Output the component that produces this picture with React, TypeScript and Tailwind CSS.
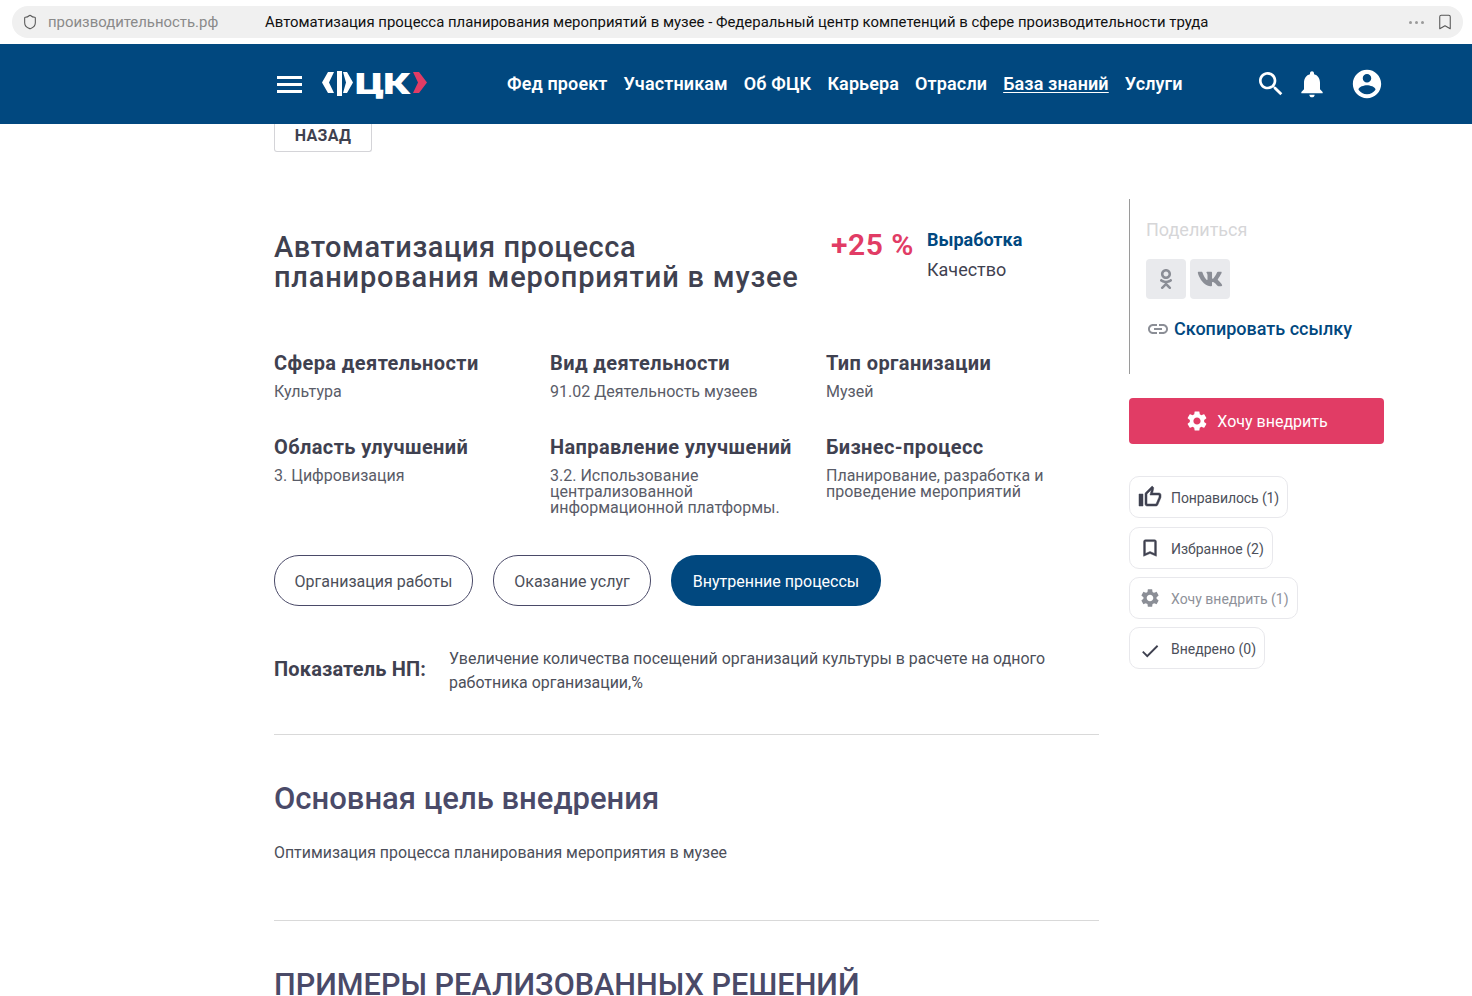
import { Bookmark, Shield } from "lucide-react";
import { FaOdnoklassniki, FaVk } from "react-icons/fa";

const NAV = ["Фед проект", "Участникам", "Об ФЦК", "Карьера", "Отрасли", "База знаний", "Услуги"];

const META = [
  { title: "Сфера деятельности", text: "Культура" },
  { title: "Вид деятельности", text: "91.02 Деятельность музеев" },
  { title: "Тип организации", text: "Музей" },
  { title: "Область улучшений", text: "3. Цифровизация" },
  { title: "Направление улучшений", text: "3.2. Использование централизованной информационной платформы." },
  { title: "Бизнес-процесс", text: "Планирование, разработка и проведение мероприятий" },
];

const GEAR =
  "M19.14 12.94c.04-.3.06-.61.06-.94 0-.32-.02-.64-.07-.94l2.03-1.58c.18-.14.23-.41.12-.61l-1.92-3.32c-.12-.22-.37-.29-.59-.22l-2.39.96c-.5-.38-1.03-.7-1.62-.94l-.36-2.54c-.04-.24-.24-.41-.48-.41h-3.84c-.24 0-.43.17-.47.41l-.36 2.54c-.59.24-1.13.57-1.62.94l-2.39-.96c-.22-.08-.47 0-.59.22L2.74 8.87c-.12.21-.08.47.12.61l2.03 1.58c-.05.3-.09.63-.09.94s.02.64.07.94l-2.03 1.58c-.18.14-.23.41-.12.61l1.92 3.32c.12.22.37.29.59.22l2.39-.96c.5.38 1.03.7 1.62.94l.36 2.54c.05.24.24.41.48.41h3.84c.24 0 .44-.17.47-.41l.36-2.54c.59-.24 1.13-.56 1.62-.94l2.39.96c.22.08.47 0 .59-.22l1.92-3.32c.12-.22.07-.47-.12-.61l-2.01-1.58zM12 15.6c-1.98 0-3.6-1.62-3.6-3.6s1.62-3.6 3.6-3.6 3.6 1.62 3.6 3.6-1.62 3.6-3.6 3.6z";

function Icon({ d, className, bold }: { d: string; className: string; bold?: boolean }) {
  return (
    <svg viewBox="0 0 24 24" fill="currentColor" stroke={bold ? "currentColor" : "none"} strokeWidth={bold ? 0.5 : 0} className={className}>
      <path d={d} />
    </svg>
  );
}

function Logo() {
  return (
    <div className="flex items-start h-[26px] w-[106px]">
      <svg viewBox="0 0 31 26" className="w-[31px] h-[26px] shrink-0" fill="white">
        <polygon points="6,1 12,1 7,11.5 12,22 6,22 0,11.5" />
        <rect x="15" y="0" width="5" height="25" />
        <polygon points="21,1 25,1 31,11.5 25,22 21,22 24,11.5" />
      </svg>
      <div className="ml-[2px] w-[58px] h-[26px] shrink-0">
        <span className="block origin-left scale-x-[1.27] text-white font-black text-[29px] leading-[25px] tracking-[-1px] font-['Inter',sans-serif]">ЦК</span>
      </div>
      <svg viewBox="0 0 14 21" className="w-[14px] h-[21px] mt-px shrink-0" fill="#e13c65">
        <polygon points="0,0 6,0 14,10.5 6,21 0,21 5,10.5" />
      </svg>
    </div>
  );
}

function ActionButton({ label, icon, muted, className }: { label: string; icon: React.ReactNode; muted?: boolean; className?: string }) {
  return (
    <div className={`flex items-center self-start h-[42px] pl-[9px] pr-2 border border-[#e8e8ec] rounded-[10px] ${className ?? ""}`}>
      <span className="w-[22px] flex justify-center">{icon}</span>
      <span className={`ml-[10px] pt-[2px] text-[14px] whitespace-nowrap ${muted ? "text-[#8e9199]" : "text-[#4c4f5a]"}`}>{label}</span>
    </div>
  );
}

export default function App() {
  return (
    <div className="h-[996px] w-[1472px] overflow-hidden bg-white font-['Roboto',sans-serif] text-[#3f4150]">
      <div className="h-[44px] px-3 pt-[6px]">
        <div className="h-[32px] w-[1451px] rounded-full bg-[#f0f0f0] flex items-center pl-[10px] pr-[9px] text-[14.92px]">
          <Shield size={16} strokeWidth={1.6} className="text-[#5a5a5a]" />
          <span className="ml-[10px] w-[217px] text-[#8a8a8a]">производительность.рф</span>
          <span className="text-[#111]">Автоматизация процесса планирования мероприятий в музее - Федеральный центр компетенций в сфере производительности труда</span>
          <span className="ml-auto flex gap-[3px]">
            <span className="w-[3px] h-[3px] rounded-full bg-[#9a9a9a]" />
            <span className="w-[3px] h-[3px] rounded-full bg-[#9a9a9a]" />
            <span className="w-[3px] h-[3px] rounded-full bg-[#9a9a9a]" />
          </span>
          <Bookmark size={18} strokeWidth={1.4} className="ml-3 text-[#555]" />
        </div>
      </div>

      <header className="h-[80px] bg-[#01487f] flex items-center pl-[277px] text-white">
        <div className="flex flex-col gap-[4px] w-[25px]">
          <span className="h-[3px] bg-white" />
          <span className="h-[3px] bg-white" />
          <span className="h-[3px] bg-white" />
        </div>
        <div className="ml-5 mt-[-1px]">
          <Logo />
        </div>
        <nav className="ml-[79px] mb-[2px] flex gap-4 text-[18px] font-semibold tracking-[0.13px]">
          {NAV.map((item) => (
            <a key={item} className={item === "База знаний" ? "underline underline-offset-2" : ""}>
              {item}
            </a>
          ))}
        </nav>
        <Icon d="M15.5 14h-.79l-.28-.27C15.41 12.59 16 11.11 16 9.5 16 5.91 13.09 3 9.5 3S3 5.91 3 9.5 5.91 16 9.5 16c1.61 0 3.09-.59 4.23-1.57l.27.28v.79l5 4.99L20.49 19l-4.99-5zm-6 0C7.01 14 5 11.99 5 9.5S7.01 5 9.5 5 14 7.01 14 9.5 11.99 14 9.5 14z" className="w-[32px] h-[32px] ml-[72px] text-white" />
        <Icon d="M12 22c1.1 0 2-.9 2-2h-4c0 1.1.89 2 2 2zm6-6v-5c0-3.07-1.64-5.64-4.5-6.32V4c0-.83-.67-1.5-1.5-1.5s-1.5.67-1.5 1.5v.68C7.63 5.36 6 7.92 6 11v5l-2 2v1h16v-1l-2-2z" className="w-[32px] h-[32px] ml-[9px] text-white" />
        <Icon d="M12 2C6.48 2 2 6.48 2 12s4.48 10 10 10 10-4.48 10-10S17.52 2 12 2zm0 3c1.66 0 3 1.34 3 3s-1.34 3-3 3-3-1.34-3-3 1.34-3 3-3zm0 14.2c-2.5 0-4.71-1.28-6-3.22.03-1.99 4-3.08 6-3.08 1.99 0 5.97 1.09 6 3.08-1.29 1.94-3.5 3.22-6 3.22z" className="w-[34px] h-[34px] ml-[22px] text-white" />
      </header>

      <main className="flex pl-[274px]">
        <div className="w-[825px]">
          <div className="flex items-center justify-center w-[98px] h-[28px] pb-[4px] border border-t-0 border-[#d4d4d8] rounded-b-[3px] font-bold text-[16px] tracking-[0.3px]">НАЗАД</div>

          <div className="flex mt-[78px] h-[66px]">
            <h1 className="w-[557px] text-[29px] leading-[30px] font-medium pt-[2px]">
              <span className="block tracking-[0.55px]">Автоматизация процесса</span>
              <span className="block tracking-[0.8px]">планирования мероприятий в музее</span>
            </h1>
            <div className="w-[96px] text-[30px] leading-[30px] font-semibold text-[#e13c65] tracking-[0.5px] whitespace-nowrap">+25 %</div>
            <div>
              <div className="text-[18px] leading-[20px] font-bold text-[#01487f]">Выработка</div>
              <div className="text-[18px] leading-[20px] mt-[10px]">Качество</div>
            </div>
          </div>

          <div className="grid grid-cols-[276px_276px_273px] mt-[55px] gap-y-[30px]">
            {META.map((m, i) => (
              <div key={m.title} className={i < 3 ? "h-[54px]" : "h-[82px]"}>
                <div className="text-[20px] leading-[24px] font-bold tracking-[0.4px] whitespace-nowrap">{m.title}</div>
                <div className="mt-[9px] text-[16px] leading-[16px] text-[#5a5c68] pr-5">{m.text}</div>
              </div>
            ))}
          </div>

          <div className="flex gap-5 mt-[38px]">
            <div className="h-[51px] w-[199px] pt-[2px] rounded-[25px] border border-[#4a4a68] flex items-center justify-center text-[16px] text-[#4c4f5a]">Организация работы</div>
            <div className="h-[51px] w-[158px] pt-[2px] rounded-[25px] border border-[#4a4a68] flex items-center justify-center text-[16px] text-[#4c4f5a]">Оказание услуг</div>
            <div className="h-[51px] w-[210px] pt-[2px] rounded-[25px] bg-[#01487f] flex items-center justify-center text-[16px] text-white">Внутренние процессы</div>
          </div>

          <div className="flex items-center mt-[41px]">
            <div className="w-[175px] mb-[4px] text-[20px] font-bold tracking-[0.15px] whitespace-nowrap">Показатель НП:</div>
            <div className="w-[620px] text-[15.95px] leading-[24px] text-[#4c4f5a]">Увеличение количества посещений организаций культуры в расчете на одного работника организации,%</div>
          </div>

          <div className="h-px bg-[#d9d9d9] mt-[39px]" />

          <h2 className="mt-[46px] text-[31px] leading-[36px] font-medium text-[#4a4a68]">Основная цель внедрения</h2>
          <p className="mt-[24px] text-[15.9px] leading-[24px] text-[#4c4f5a]">Оптимизация процесса планирования мероприятия в музее</p>

          <div className="h-px bg-[#d9d9d9] mt-[55px]" />

          <h2 className="mt-[46px] text-[30.6px] leading-[36px] font-medium text-[#4a4a68] whitespace-nowrap">ПРИМЕРЫ РЕАЛИЗОВАННЫХ РЕШЕНИЙ</h2>
        </div>

        <aside className="ml-[30px] w-[255px] pt-[75px] flex flex-col">
          <div className="h-[175px] border-l border-[#9a9a9a] pl-4">
            <div className="pt-[19px] text-[18px] leading-[24px] text-[#d6d6d8]">Поделиться</div>
            <div className="flex gap-1 mt-[17px]">
              <div className="w-10 h-10 rounded bg-[#e9eaed] flex items-center justify-center text-[#8b8e96]">
                <FaOdnoklassniki size={20} />
              </div>
              <div className="w-10 h-10 rounded bg-[#e9eaed] flex items-center justify-center text-[#8b8e96]">
                <FaVk size={26} />
              </div>
            </div>
            <div className="flex items-center mt-[16px]">
              <Icon d="M3.9 12c0-1.71 1.39-3.1 3.1-3.1h4V7H7c-2.76 0-5 2.24-5 5s2.24 5 5 5h4v-1.9H7c-1.71 0-3.1-1.39-3.1-3.1zM8 13h8v-2H8v2zm9-6h-4v1.9h4c1.71 0 3.1 1.39 3.1 3.1s-1.39 3.1-3.1 3.1h-4V17h4c2.76 0 5-2.24 5-5s-2.24-5-5-5z" className="w-6 h-6 text-[#8b8e96]" />
              <span className="ml-[4px] text-[18px] font-medium text-[#01487f]">Скопировать ссылку</span>
            </div>
          </div>

          <div className="mt-[24px] h-[46px] rounded-[4px] bg-[#e13c65] flex items-center justify-center text-white text-[16px]">
            <Icon d={GEAR} className="w-6 h-6" />
            <span className="ml-2 pt-px">Хочу внедрить</span>
          </div>

          <div className="mt-[32px] flex flex-col gap-2">
            <ActionButton className="mb-px w-[159px] tracking-[-0.1px]" label="Понравилось (1)" icon={<Icon bold d="M9 21h9c.83 0 1.54-.5 1.84-1.22l3.02-7.05c.09-.23.14-.47.14-.73v-2c0-1.1-.9-2-2-2h-6.31l.95-4.57.03-.32c0-.41-.17-.79-.44-1.06L14.17 1 7.58 7.59C7.22 7.95 7 8.45 7 9v10c0 1.1.9 2 2 2zM9 9l4.34-4.34L12 10h9v2l-3 7H9V9zM1 9h4v12H1z" className="w-6 h-6 shrink-0 text-[#3f4150]" />} />
            <ActionButton label="Избранное (2)" icon={<Icon bold d="M17 3H7c-1.1 0-2 .9-2 2v16l7-3 7 3V5c0-1.1-.9-2-2-2zm0 15l-5-2.18L7 18V5h10v13z" className="w-6 h-6 text-[#3f4150]" />} />
            <ActionButton muted label="Хочу внедрить (1)" icon={<Icon d={GEAR} className="w-6 h-6 text-[#8b8e96]" />} />
            <ActionButton label="Внедрено (0)" icon={<Icon d="M9 16.17 4.83 12l-1.42 1.41L9 19 21 7l-1.41-1.41z" className="w-6 h-6 translate-y-[3px] text-[#3f4150]" />} />
          </div>
        </aside>
      </main>
    </div>
  );
}
